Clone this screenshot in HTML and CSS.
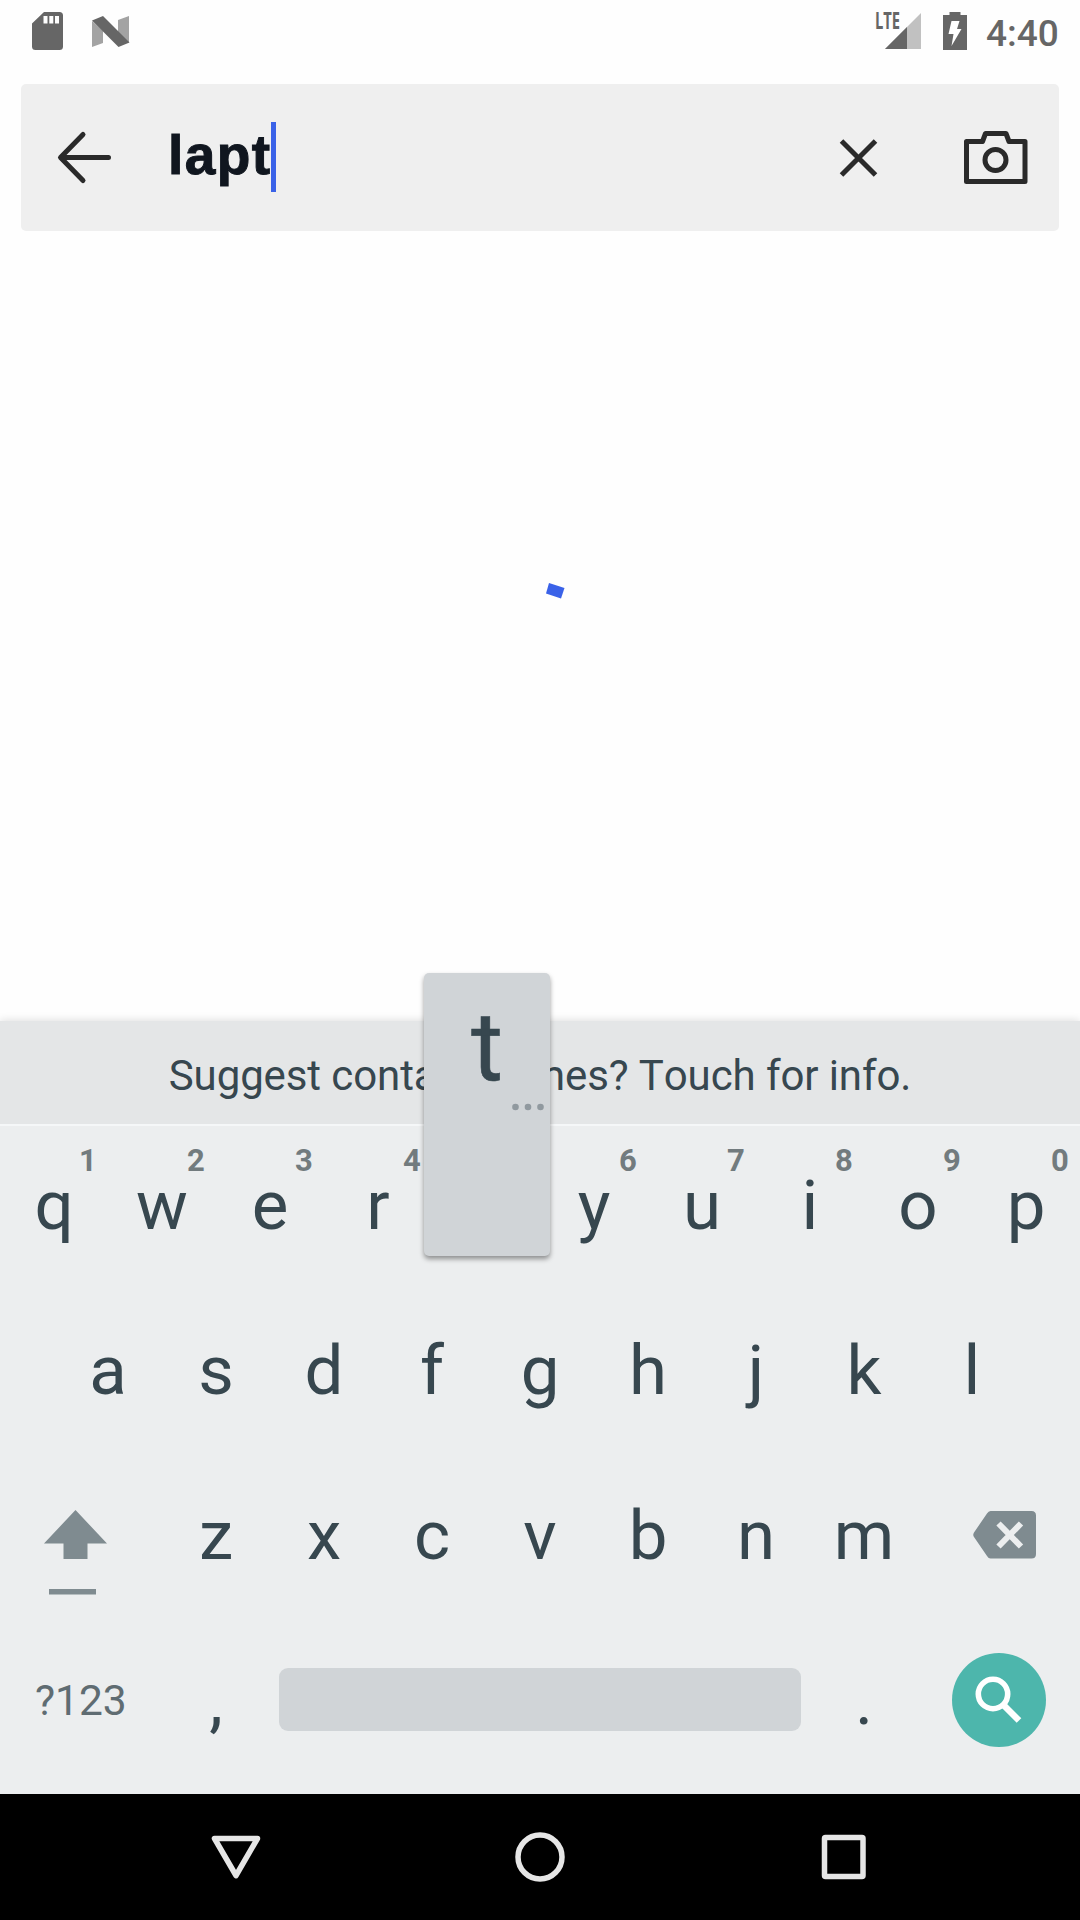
FILE: index.html
```html
<!DOCTYPE html>
<html lang="en">
<head>
<meta charset="utf-8">
<title>Search</title>
<link rel="stylesheet" href="styles.css">
</head>
<body>
<div class="screen">
  <header class="status">
    <div class="status-left">
      <svg class="sd" viewBox="0 0 32 38"><path fill="#666" fill-rule="evenodd" d="M12 0H27.500Q31 0 31 3.500V34.500Q31 38 27.500 38H3.500Q0 38 0 34.500V11.500ZM11.500 4V11.500H15.500V4ZM17.300 4V11.500H21.300V4ZM23 4V11.500H27V4Z"/></svg>
      <svg class="n-logo" viewBox="0 0 38 32"><path fill="#a3a3a3" d="M0 5L11 15V27L0 31ZM26 4L37 0V27L26 17Z"/><path fill="#666" d="M0 4.500L11 0L37.500 26.500L26.500 31Z"/></svg>
    </div>
    <div class="status-right">
      <div class="network">
        <svg class="signal" viewBox="0 0 36 36"><path fill="#c1c1c1" d="M36 0V36H0Z"/><path fill="#666" d="M22 14V36H0Z"/></svg>
        <span class="lte">LTE</span>
      </div>
      <svg class="battery" viewBox="0 0 24 38"><path fill="#666" d="M6.500 0H17.500V3H24V38H0V3H6.500Z"/><path fill="#fff" d="M8.500 9H16.500L14 17H18.500L8.500 34L10.500 22H5.500Z"/></svg>
      <span class="clock">4:40</span>
    </div>
  </header>

  <div class="search">
    <svg class="back" viewBox="0 0 60 52"><path d="M28 2.500L5.500 25.500L28 48.500M6 25.500H53.500"/></svg>
    <div class="query"><span>lapt</span><i class="caret"></i></div>
    <svg class="clear" viewBox="0 0 40 40"><path d="M3.500 3L37.500 37M37.500 3L3.500 37"/></svg>
    <svg class="camera" viewBox="0 0 64 54"><path d="M3.500 10.500H19.500L22.500 2.500H43L46 10.500H62V50.500H3.500Z"/><circle cx="32.500" cy="29" r="10.500"/></svg>
  </div>

  <main class="content">
    <svg class="spinner" viewBox="0 0 120 120"><path fill="#3a62e8" d="M69 19L84.500 24L81 34.500L66 29.500Z"/></svg>
  </main>

  <section class="keyboard">
    <div class="suggest">Suggest contact names? Touch for info.</div>
    <div class="keys">
      <div class="row">
        <div class="key">q<sup>1</sup></div><div class="key">w<sup>2</sup></div><div class="key">e<sup>3</sup></div><div class="key">r<sup>4</sup></div><div class="key"></div><div class="key">y<sup>6</sup></div><div class="key">u<sup>7</sup></div><div class="key">i<sup>8</sup></div><div class="key">o<sup>9</sup></div><div class="key">p<sup>0</sup></div>
      </div>
      <div class="row inset">
        <div class="key">a</div><div class="key">s</div><div class="key">d</div><div class="key">f</div><div class="key">g</div><div class="key">h</div><div class="key">j</div><div class="key">k</div><div class="key">l</div>
      </div>
      <div class="row">
        <div class="wide shift"><svg viewBox="0 0 64 86"><path fill="#7f8b90" d="M31.500 0L63 33.500H43.500V49H19.500V33.500H0ZM5 79H52V84.500H5Z"/></svg></div>
        <div class="key">z</div><div class="key">x</div><div class="key">c</div><div class="key">v</div><div class="key">b</div><div class="key">n</div><div class="key">m</div>
        <div class="wide delete"><svg viewBox="0 0 64 48"><path fill="#7f8b90" d="M17.500 0H58.500Q63 0 63 4.500V43Q63 47.500 58.500 47.500H17.500Q15.500 47.500 14 45L1 26Q-.5 23.750 1 21.500L14 2.500Q15.500 0 17.500 0Z"/><path d="M25.500 12.500L48 35.500M48 12.500L25.500 35.500" stroke="#eceeef" stroke-width="6"/></svg></div>
      </div>
      <div class="row">
        <div class="wide symbols">?123</div>
        <div class="key">,</div>
        <div class="space"></div>
        <div class="key">.</div>
        <div class="wide go"><svg viewBox="0 0 94 94"><circle cx="47" cy="47" r="47" fill="#4db6ac"/><g fill="none" stroke="#fff"><circle cx="41" cy="41" r="14.700" stroke-width="5.600"/><path d="M51.500 52L67 67.500" stroke-width="6.500"/></g></svg></div>
      </div>
    </div>
    <div class="popup"><span>t</span><svg viewBox="0 0 32 8"><g fill="#90999f"><circle cx="3.500" cy="4" r="3.300"/><circle cx="16" cy="4" r="3.300"/><circle cx="28.500" cy="4" r="3.300"/></g></svg></div>
  </section>

  <nav class="nav">
    <svg viewBox="0 0 54 54"><path d="M5.500 8.500H48.500L27 45.500Z"/></svg>
    <svg viewBox="0 0 54 54"><circle cx="27" cy="27" r="22"/></svg>
    <svg viewBox="0 0 54 54"><rect x="7.500" y="7.500" width="38.500" height="39" rx="1"/></svg>
  </nav>
</div>
</body>
</html>
```
FILE: styles.css
```css
* { box-sizing: border-box; }
body { margin: 0; background: #fefefe; font-family: Roboto, "Liberation Sans", sans-serif; }
svg { display: block; flex: none; overflow: visible; }
.screen { width: 1080px; height: 1920px; display: flex; flex-direction: column; overflow: hidden; }

.status { height: 84px; display: flex; justify-content: space-between; padding: 12px 22px 0 32px; }
.status-left, .status-right { display: flex; align-items: flex-start; }
.sd { width: 32px; height: 38px; }
.n-logo { width: 38px; height: 32px; margin: 4px 0 0 28px; }
.network { position: relative; width: 58px; }
.signal { width: 36px; height: 36px; margin-top: 1px; }
.lte { position: absolute; left: -10px; top: -3px; font: 700 23px/23px "Open Sans", sans-serif; color: #666; transform: scaleX(.64); transform-origin: left; }
.battery { width: 24px; height: 38px; }
.clock { width: 72px; margin-left: 19px; font-size: 37px; line-height: 43px; font-weight: 500; color: #666; white-space: nowrap; }

.search { height: 147px; margin: 0 21px; padding: 0 32px 0 34px; border-radius: 5px; background: #efefef; display: flex; align-items: center; }
.search svg { fill: none; stroke: #2a2a2a; stroke-width: 5; }
.back { width: 60px; height: 52px; stroke-linecap: round; stroke-linejoin: round; }
.query { flex: 1; height: 70px; margin: -1px 0 0 53px; display: flex; font: 700 55px/66px "Liberation Sans", Arial, sans-serif; letter-spacing: 1.400px; color: #10161f; -webkit-text-stroke: 1px #10161f; }
.caret { width: 5px; height: 70px; background: #3a62e8; }
.clear { width: 40px; height: 40px; margin-right: 85px; }
.camera { width: 64px; height: 54px; stroke-linejoin: round; }

.content { flex: 1; display: flex; justify-content: center; padding-top: 333px; }
.spinner { width: 120px; height: 120px; }

.keyboard { position: relative; background: #eceeef; box-shadow: 0 -1px 8px rgba(0,0,0,.12); }
.suggest { height: 105px; border-bottom: 2px solid #f5f7f8; background: #e4e6e7; color: #37474f; font-size: 42px; line-height: 109px; text-align: center; font-kerning: none; letter-spacing: -.1px; }
.keys { height: 668px; color: #37474f; font-size: 69px; line-height: 160px; }
.row { height: 165px; display: flex; }
.inset { padding: 0 54px; }
.key { position: relative; width: 108px; text-align: center; }
.key sup { position: absolute; left: 68px; top: 15px; width: 40px; font-size: 31px; line-height: 40px; font-weight: 700; color: #727b7e; }
.wide { width: 162px; }
.shift svg { width: 64px; height: 86px; margin: 54px 0 0 44px; }
.delete svg { width: 64px; height: 48px; margin: 55px 0 0 55px; }
.symbols { font-size: 42.500px; line-height: 159px; color: #5f6c72; padding-left: 35px; }
.space { width: 522px; height: 63px; margin: 47px 9px; border-radius: 9px; background: #d0d4d7; }
.go svg { width: 94px; height: 94px; margin: 32px 0 0 34px; }

.popup { position: absolute; left: 424px; top: -48px; width: 126px; height: 283px; border-radius: 5px; background: #d0d4d7; color: #37474f; box-shadow: 0 3px 5px rgba(0,0,0,.4); font-size: 97px; line-height: 149px; text-align: center; }
.popup span { -webkit-text-stroke: .6px #37474f; }
.popup svg { position: absolute; left: 88px; top: 130px; width: 32px; height: 8px; }

.nav { height: 126px; background: #000; display: flex; justify-content: center; align-items: center; gap: 250px; }
.nav svg { width: 54px; height: 54px; fill: none; stroke: #e6e6e6; stroke-width: 5.500; stroke-linejoin: round; }
```
